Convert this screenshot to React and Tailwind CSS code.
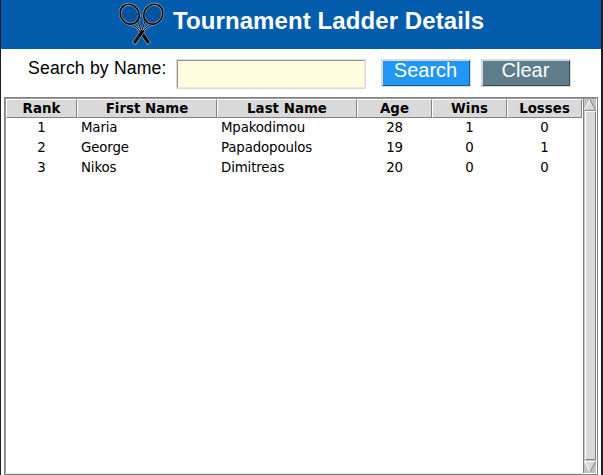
const columns = [
  { key: "rank", label: "Rank", width: "w-[71px]", align: "text-center" },
  { key: "first", label: "First Name", width: "w-[140px]", align: "pl-1" },
  { key: "last", label: "Last Name", width: "w-[140px]", align: "pl-1" },
  { key: "age", label: "Age", width: "w-[75px]", align: "text-center" },
  { key: "wins", label: "Wins", width: "w-[75px]", align: "text-center" },
  { key: "losses", label: "Losses", width: "w-[75px]", align: "text-center" },
];

const players = [
  { rank: 1, first: "Maria", last: "Mpakodimou", age: 28, wins: 1, losses: 0 },
  { rank: 2, first: "George", last: "Papadopoulos", age: 19, wins: 0, losses: 1 },
  { rank: 3, first: "Nikos", last: "Dimitreas", age: 20, wins: 0, losses: 0 },
];

function Racket({ flip }) {
  return (
    <g transform={flip ? "matrix(-1 0 0 1 47 0)" : undefined}>
      <path d="M13 22.5 L18 25 L24.5 31.5 M20 18 L21.5 24 L24.5 31.5" fill="none" stroke="#a9b4bd" strokeWidth="2" />
      <path d="M13 22.5 L18 25 L24.5 31.5 M20 18 L21.5 24 L24.5 31.5" fill="none" stroke="#080808" strokeWidth="1" />
      <path d="M22 28.5 L31.2 41.8" stroke="#a9b4bd" strokeWidth="4.4" />
      <path d="M22 28.5 L30.8 41.2" stroke="#080808" strokeWidth="3.2" />
      <ellipse cx="11.7" cy="12.2" rx="9.2" ry="10.3" fill="#0559a8" stroke="#a9b4bd" strokeWidth="2.8" transform="rotate(-35 11.7 12.2)" />
      <ellipse cx="11.7" cy="12.2" rx="9.2" ry="10.3" fill="none" stroke="#080808" strokeWidth="1.7" transform="rotate(-35 11.7 12.2)" />
      <path
        d="M4 11 L14 20 M5 8 L17 19 M7 6 L19 17 M10 4 L20 13 M4 13 L12 5 M5 16 L15 6 M8 18 L18 8 M11 20 L20 11"
        stroke="#07427f"
        strokeWidth="0.7"
      />
    </g>
  );
}

function Button({ children, className }) {
  return (
    <button className={`flex h-7 w-[90px] justify-center border-2 border-t-[#d0dbe0] border-l-[#d0dbe0] pr-px text-[20px] leading-[19px] text-white outline-1 -outline-offset-1 outline-[#d9d9d9] ${className}`}>
      {children}
    </button>
  );
}

function Scrollbar() {
  return (
    <div className="flex w-3 flex-col bg-[#c3c3c3]">
      <svg width="12" height="12" className="shrink-0">
        <path d="M6 0.5 L11.5 11 H0.5 Z" fill="#d9d9d9" />
        <path d="M0.5 11 L6 0.5" stroke="#fff" />
        <path d="M6 0.5 L11.5 11.3 H0.5" fill="none" stroke="#828282" />
      </svg>
      <div className="ml-px h-[350px] w-[11px] border border-t-white border-r-[#828282] border-b-[#828282] border-l-white bg-[#d9d9d9]" />
      <svg width="12" height="12" className="mt-px shrink-0">
        <path d="M0.5 0.5 H11.5 L6 11 Z" fill="#d9d9d9" />
        <path d="M6 11 L0.5 0.5 H11.5" fill="none" stroke="#fff" />
        <path d="M11.5 0.5 L6 11" stroke="#828282" />
      </svg>
    </div>
  );
}

export default function App() {
  return (
    <main className="h-[475px] w-[603px] overflow-hidden border-r-2 border-l border-[#1b1b29] bg-white font-['Liberation_Sans',sans-serif] text-black">
      <header className="flex h-[49px] bg-[#035cac] pl-[117px]">
        <svg width="47" height="44" viewBox="0 0 47 44" className="mt-[2px]">
          <Racket />
          <Racket flip />
        </svg>
        <h1 className="ml-[8px] pt-[6px] text-[24px] leading-[30px] font-bold tracking-[0.09px] whitespace-nowrap text-white">
          Tournament Ladder Details
        </h1>
      </header>

      <form className="flex h-12 items-start pt-[10px] pl-[27px]" onSubmit={(e) => e.preventDefault()}>
        <label htmlFor="name" className="w-[148px] text-[17.6px] leading-[19px] tracking-[0.18px] whitespace-nowrap">
          Search by Name:
        </label>
        <div className="h-[30px] w-[190px] border border-[#d9d9d9] bg-[#ffffe0]">
          <input
            id="name"
            className="block h-full w-full border border-t-[#93938a] border-r-[#e8e8da] border-b-[#e8e8da] border-l-[#93938a] bg-[#ffffe0] outline-none"
          />
        </div>
        <div className="ml-[15px] flex gap-[10px]">
          <Button className="border-r-[#145a94] border-b-[#145a94] bg-[#2196f3]">Search</Button>
          <Button className="border-r-[#3a4b53] border-b-[#3a4b53] bg-[#607d8b]">Clear</Button>
        </div>
      </form>

      <section className="ml-[3px] flex h-[378px] w-[594px] border border-[#828282] font-['DejaVu_Sans',sans-serif] text-[13.33px]">
        <div className="flex h-full w-[592px] border border-t-[#9a9a9a] border-l-[#9a9a9a] border-r-white border-b-white">
          <div className="h-[375px] w-[577px] border-b border-[#e6e6e6]">
            <div className="flex">
              {columns.map((column) => (
                <div
                  key={column.key}
                  className={`h-[19px] border border-t-white border-r-[#828282] border-b-[#828282] border-l-white bg-[#d9d9d9] text-center leading-[18px] font-bold tracking-[0.04px] ${column.width}`}
                >
                  {column.label}
                </div>
              ))}
            </div>
            {players.map((player) => (
              <div key={player.rank} className="flex h-5 leading-[19px] tracking-[-0.13px]">
                {columns.map((column) => (
                  <div key={column.key} className={`${column.width} ${column.align}`}>
                    {player[column.key]}
                  </div>
                ))}
              </div>
            ))}
          </div>
          <div className="w-px bg-[#828282]" />
          <Scrollbar />
        </div>
      </section>
    </main>
  );
}
